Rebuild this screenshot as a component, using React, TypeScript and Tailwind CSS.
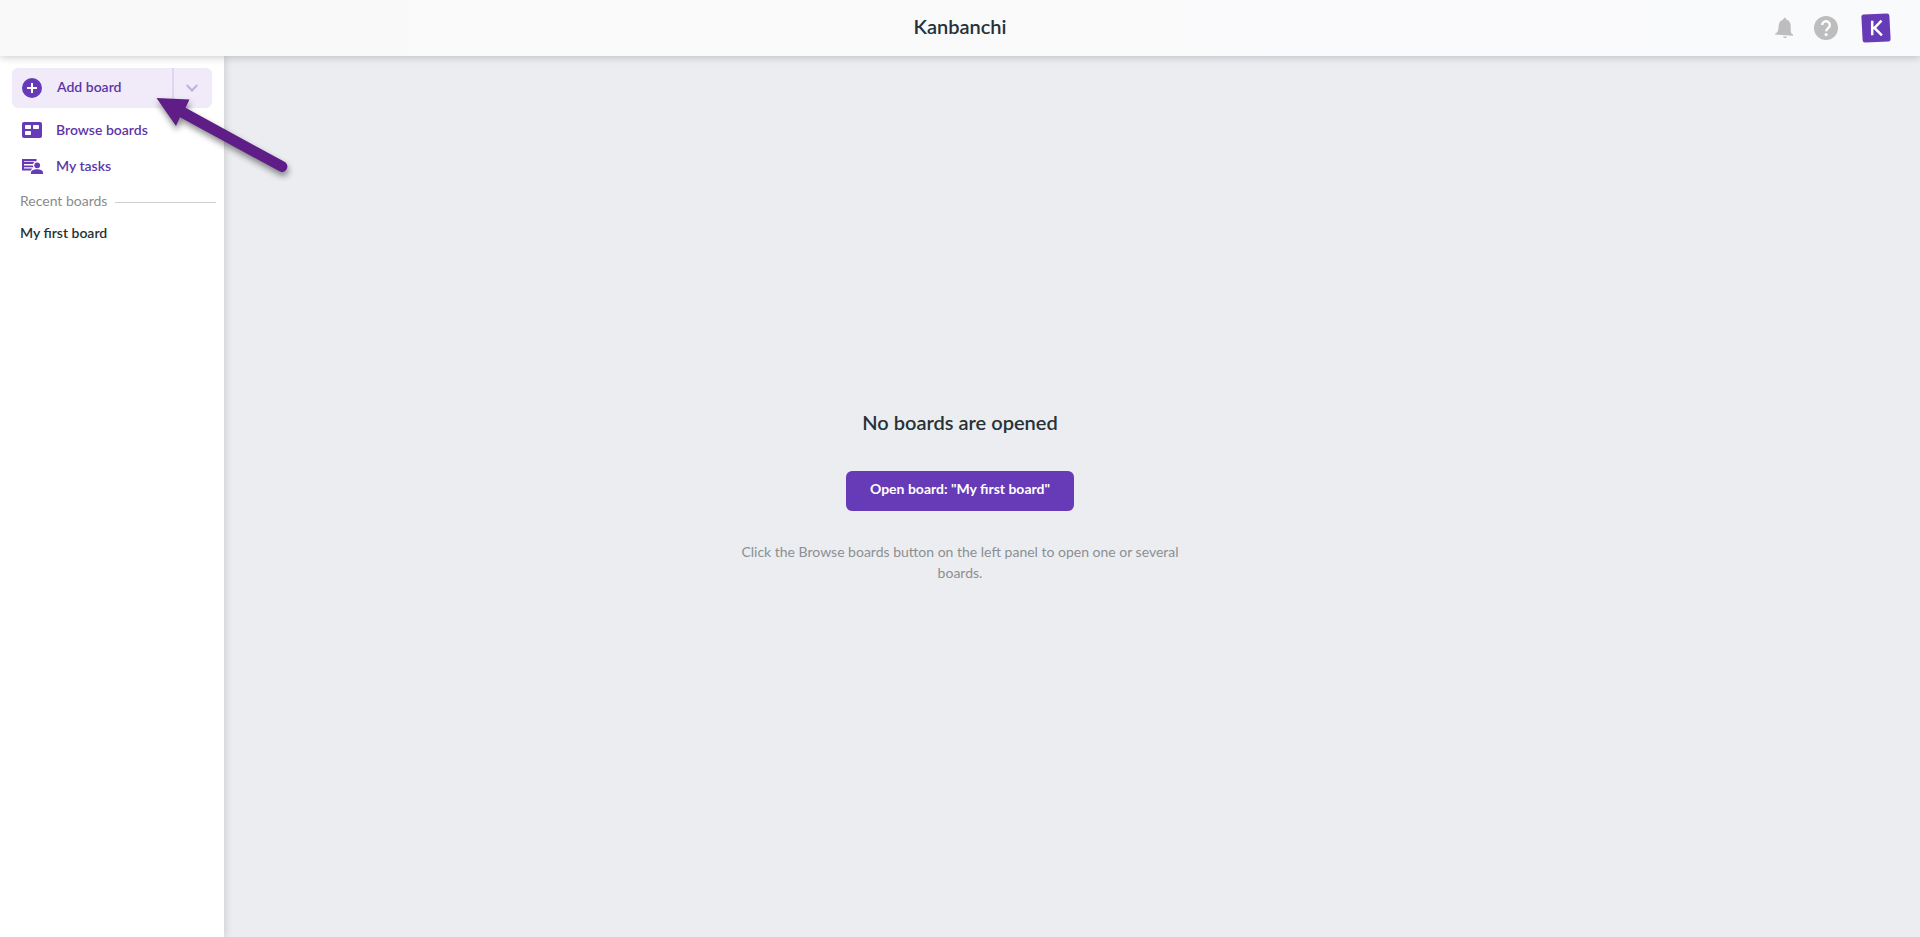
import React from "react";

function PlusCircleIcon() {
  return (
    <svg viewBox="0 0 20 20" className="size-5" aria-hidden="true">
      <circle cx="10" cy="10" r="10" fill="#673ab7" />
      <path d="M10 5v10M5 10h10" stroke="#fff" strokeWidth="2" />
    </svg>
  );
}

function BoardsIcon() {
  return (
    <svg viewBox="0 0 20 16" className="h-4 w-5" aria-hidden="true">
      <rect width="20" height="16" rx="2" fill="#673ab7" />
      <g fill="#fff">
        <rect x="3" y="3" width="6" height="4" rx="0.8" />
        <rect x="11" y="3" width="6" height="4" rx="0.8" />
        <rect x="3" y="9" width="6" height="4" rx="0.8" />
      </g>
    </svg>
  );
}

function TasksIcon() {
  return (
    <svg viewBox="0 0 21 15" className="h-[15px] w-[21px]" aria-hidden="true">
      <path d="M0 0h14.500v2.200H2v0.900h10.300a4 4 0 0 0-1.200 2H2v1.400h8.900a4 4 0 0 0 .6 1.700H2v1.300h8.500a3 3 0 0 0-1.500 2H0z" fill="#673ab7" />
      <circle cx="15.200" cy="6.300" r="2.900" fill="#673ab7" />
      <path d="M9 15v-1.600c0-2.200 3.200-3.200 6-3.200s6 1 6 3.200V15z" fill="#673ab7" />
    </svg>
  );
}

function BellIcon() {
  return (
    <svg viewBox="0 0 20 22" className="h-[22px] w-5" fill="#bdbdbd" aria-hidden="true">
      <path d="M10.800.8c.8 0 1.300.6 1.300 1.400v.4c3 .8 4.500 3 4.600 6l.1 5.200c0 1.700.5 2.700 2.200 3.800v1.200L1 17.600v-.9c2-1 3-2.200 3.200-4l.7-5.100c.4-2.600 2-4.400 4.500-5v-.4c0-.8.600-1.400 1.400-1.400z" />
      <path d="M9.200 19.400l3.900.3c-.2.900-1 1.500-2.100 1.400-1.100-.1-1.800-.8-1.800-1.700z" />
    </svg>
  );
}

function HelpIcon() {
  return (
    <svg viewBox="0 0 24 24" className="size-6" aria-hidden="true">
      <circle cx="12" cy="12" r="12" fill="#bdbdbd" />
      <path d="M8.200 9a3.800 3.800 0 1 1 6 3.100c-1.300 1-2.100 1.600-2.100 3.200" fill="none" stroke="#fff" strokeWidth="2.400" />
      <circle cx="12.100" cy="18.600" r="1.600" fill="#fff" />
    </svg>
  );
}

function LogoIcon() {
  return (
    <svg viewBox="0 0 30 30" className="size-[30px]" aria-hidden="true">
      <rect x="1" y="1" width="28" height="28" rx="2.500" fill="#673ab7" transform="rotate(-3 15 15)" />
      <path d="M11.200 7.700v14.600M20.500 7.700l-7 7.300 7.400 7.300M11.200 15h2.600" fill="none" stroke="#fff" strokeWidth="2.500" />
    </svg>
  );
}

function PointerArrow() {
  return (
    <svg
      viewBox="0 0 150 90"
      className="pointer-events-none absolute left-[150px] top-[90px] z-30 h-[90px] w-[150px] drop-shadow-[1px_4px_3px_rgba(0,0,0,0.45)]"
      fill="#5f1d87"
      aria-hidden="true"
    >
      <path d="M6.500 8L39.500 9.500L35.500 17.800L134.500 71.800a5.300 5.300 0 0 1-5 9.500L30 27.200L26 36z" />
    </svg>
  );
}

export default function App() {
  return (
    <div className="relative flex min-h-screen flex-col bg-[#ebedf1] font-['Lato',sans-serif] text-[#263238]">
      <header className="z-20 grid h-14 grid-cols-[1fr_auto_1fr] items-center bg-linear-to-r from-[#f9f9f9] to-[#f9fafc] shadow-[0_1px_8px_rgba(0,0,0,0.22)]">
        <h1 className="col-start-2 pb-1 text-xl font-semibold">Kanbanchi</h1>
        <div className="flex items-center justify-end pr-[29px]">
          <button type="button" aria-label="Notifications" className="mr-5">
            <BellIcon />
          </button>
          <button type="button" aria-label="Help" className="mr-[23px]">
            <HelpIcon />
          </button>
          <button type="button" aria-label="Account">
            <LogoIcon />
          </button>
        </div>
      </header>

      <div className="grid flex-1 grid-cols-[224px_1fr_224px]">
        <aside className="z-10 bg-white pt-3 shadow-[1px_0_8px_rgba(0,0,0,0.15)]">
          <div className="mx-3 flex h-10 overflow-hidden rounded-md bg-[#f0eaf9] text-sm font-semibold text-[#5e35a8]">
            <button type="button" className="flex flex-1 items-center gap-[15px] pl-[10px]">
              <PlusCircleIcon />
              <span className="pb-0.5">Add board</span>
            </button>
            <button
              type="button"
              aria-label="More add options"
              className="flex w-10 items-center justify-center border-l-2 border-[#dfd7ef] pr-0.5"
            >
              <svg viewBox="0 0 12 8" className="h-2 w-3" fill="none" stroke="#beb0df" strokeWidth="2" aria-hidden="true">
                <path d="M0.700 1L6 6.500L11.300 1" />
              </svg>
            </button>
          </div>
          <nav className="mt-1 text-sm font-semibold text-[#5e35a8]">
            <a href="#boards" className="flex h-9 items-center gap-[14px] pl-[22px]">
              <BoardsIcon />
              <span>Browse boards</span>
            </a>
            <a href="#tasks" className="flex h-9 items-center gap-[13px] pl-[22px]">
              <TasksIcon />
              <span>My tasks</span>
            </a>
          </nav>
          <h2 className="mt-[7px] flex items-center gap-2 pl-5 pr-2 text-sm text-[#8b8b8b] after:mt-[3px] after:h-px after:flex-1 after:bg-[#cfcfcf]">
            Recent boards
          </h2>
          <a href="#my-first-board" className="mt-3 block pl-5 text-sm font-semibold">
            My first board
          </a>
        </aside>

        <main className="flex flex-col items-center justify-center pb-[3px] text-center">
          <h2 className="text-xl font-semibold">No boards are opened</h2>
          <button
            type="button"
            className="mt-[35px] h-10 rounded-md bg-[#673ab7] px-6 pb-1 text-sm font-bold text-white"
          >
            Open board: "My first board"
          </button>
          <p className="mt-[30px] max-w-[460px] text-sm leading-[21px] text-[#8c8f93]">
            Click the Browse boards button on the left panel to open one or several boards.
          </p>
        </main>
      </div>

      <PointerArrow />
    </div>
  );
}
